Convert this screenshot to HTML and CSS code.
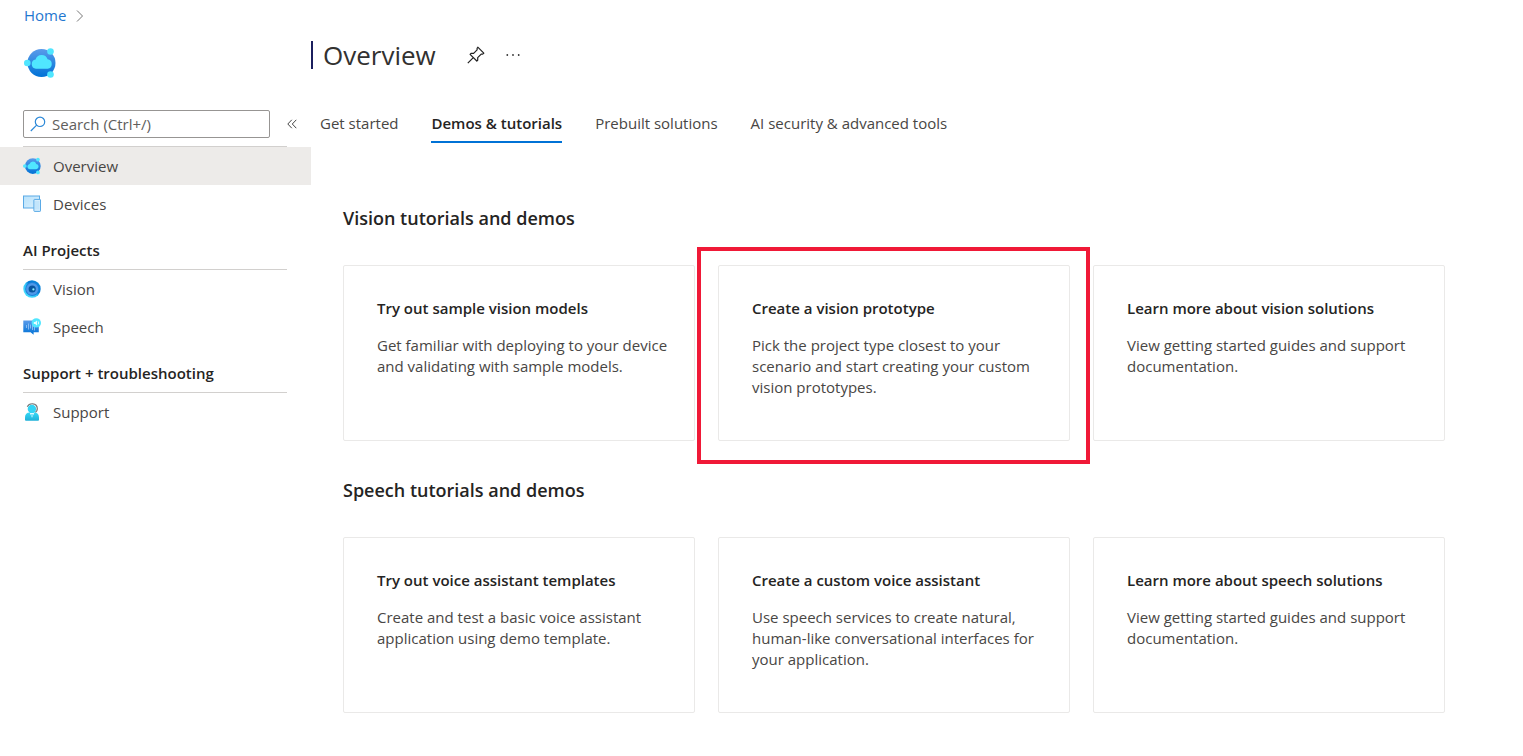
FILE: index.html
```html
<!DOCTYPE html>
<html lang="en">
<head>
<meta charset="utf-8">
<title>Overview</title>
<meta name="viewport" content="width=device-width, initial-scale=1">
<link rel="stylesheet" href="styles.css">
</head>
<body>
<svg width="0" height="0" class="defs" aria-hidden="true">
  <defs>
    <linearGradient id="blue" x1="0" y1="0" x2="0" y2="1"><stop offset="0" stop-color="#5a9bea"/><stop offset="1" stop-color="#0072d6"/></linearGradient>
    <linearGradient id="screen" x1="0" y1="0" x2="1" y2="1"><stop offset="0" stop-color="#b9e2fb"/><stop offset="1" stop-color="#d9f0fe"/></linearGradient>
    <linearGradient id="person" x1="0" y1="0" x2="0" y2="1"><stop offset="0" stop-color="#35d9f7"/><stop offset="1" stop-color="#1fb0d8"/></linearGradient>
    <linearGradient id="ring" x1="0" y1="1" x2="1" y2="0"><stop offset="0" stop-color="#50e6ff"/><stop offset=".45" stop-color="#32c4f7"/><stop offset=".6" stop-color="#0078d4"/><stop offset="1" stop-color="#1490df"/></linearGradient>
    <symbol id="percept" viewBox="0 0 32 32">
      <circle cx="17.500" cy="16" r="14" fill="url(#blue)"/>
      <circle cx="26.500" cy="4.500" r="3.300" fill="#50e6ff"/>
      <circle cx="26.500" cy="27.500" r="3.300" fill="#50e6ff"/>
      <circle cx="3.300" cy="16" r="3.300" fill="#50e6ff"/>
      <path d="M12 21.800a4.700 4.700 0 0 1-.4-9.300 6.300 6.300 0 0 1 12-.2 4.800 4.800 0 0 1 .1 9.500z" fill="#50e6ff"/>
    </symbol>
  </defs>
</svg>
<nav class="breadcrumb" aria-label="Breadcrumb">
  <a href="#">Home</a>
  <svg width="8" height="12" viewBox="0 0 8 12" fill="none" stroke="#777"><path d="M1 .5 6.500 6 1 11.500"/></svg>
</nav>
<div class="blade">
  <aside class="sidebar">
    <svg class="logo" width="32" height="32"><use href="#percept"/></svg>
    <div class="search-row">
      <label class="search">
        <svg width="16" height="16" viewBox="0 0 16 16" fill="none" stroke="#2b88d8" stroke-width="1.200"><circle cx="10" cy="5.800" r="4.700"/><path d="M6.600 9.200.8 15"/></svg>
        <input type="search" placeholder="Search (Ctrl+/)" aria-label="Search">
      </label>
      <button class="collapse" type="button" aria-label="Collapse menu">
        <svg width="10" height="10" viewBox="0 0 10 10" fill="none" stroke="#444"><path d="M4.800.8.800 5l4 4.200M9.300.8l-4 4.200 4 4.200"/></svg>
      </button>
    </div>
    <nav class="menu">
      <hr>
      <a class="item selected" href="#"><svg width="18" height="18"><use href="#percept"/></svg>Overview</a>
      <a class="item" href="#"><svg width="18" height="18" viewBox="0 0 18 18"><rect x=".5" y="1" width="16" height="12" fill="url(#screen)" stroke="#5aaae6"/><rect x="10.900" y="4.400" width="6.600" height="12" rx=".6" fill="#d5edfd" stroke="#5aaae6"/><path d="M12 6h4.400v8.500H12z" fill="#c3e5fb"/></svg>Devices</a>
      <h2>AI Projects</h2>
      <hr>
      <a class="item" href="#"><svg width="18" height="18" viewBox="0 0 18 18"><circle cx="9" cy="9" r="8.700" fill="url(#ring)"/><circle cx="9.200" cy="9" r="7" fill="#1b80dc"/><circle cx="9.200" cy="9" r="6" fill="#4f98e8"/><circle cx="9.200" cy="9" r="3.600" fill="#08559f"/><circle cx="10.400" cy="9.400" r="1.100" fill="#8ff0ff"/></svg>Vision</a>
      <a class="item" href="#"><svg width="18" height="18" viewBox="0 0 18 18"><path d="M.3 2.500h15.500v11.800h-5.200v2.500L7.600 14.300H.3z" fill="url(#blue)"/><path d="M3.500 7v3M5.500 5.500v6M7.500 6.500v4M9.500 5v7M11.500 8.500v4" stroke="#9cc8f6" stroke-width=".8"/><circle cx="13.300" cy="4.900" r="4.700" fill="#50e6ff"/><path d="M10.800 3.900h1.300L14 2.500v4.900l-1.900-1.400h-1.300z" fill="#e6fcff"/><path d="M15.100 3.400q1 1.500 0 3" stroke="#e6fcff" fill="none"/></svg>Speech</a>
      <h2>Support + troubleshooting</h2>
      <hr>
      <a class="item" href="#"><svg width="18" height="18" viewBox="0 0 18 18"><path d="M4.300 3.800C6-.2 14-.8 14.300 5.500c0 2.200-.7 3.200-2.300 3.700" fill="none" stroke="#777" stroke-width="1.200"/><path d="M2 17v-2.700c0-3.300 2-4.800 4.500-4.800h5c2.500 0 4.500 1.500 4.500 4.800V17q0 .7-1 .7H3q-1 0-1-.7z" fill="url(#person)"/><circle cx="8.900" cy="6" r="4.200" fill="#32d4f5"/><path d="m6.800 10.100 2.200 4.600 2.200-4.600z" fill="#eafaff"/><path d="m9 10.800.8 1-.8 3-.8-3z" fill="#32d4f5"/></svg>Support</a>
    </nav>
  </aside>
  <main class="content">
    <header class="title-bar">
      <h1>Overview</h1>
      <button type="button" aria-label="Pin">
        <svg width="18" height="18" viewBox="0 0 18 18" fill="none" stroke="#222" stroke-width="1.200" stroke-linejoin="round"><path d="M10.800 1.200 16.800 7.200 15.700 8.100H14.200L10.700 11.600V14.200L9.800 15 3.100 8.300 4 7.400H6.600L10.100 3.900V2.300zM6.300 11.600.8 17.200"/></svg>
      </button>
      <button type="button" aria-label="More">
        <svg width="14" height="4" viewBox="0 0 14 4" fill="#333"><circle cx="1.300" cy="2" r=".9"/><circle cx="7" cy="2" r=".9"/><circle cx="12.700" cy="2" r=".9"/></svg>
      </button>
    </header>
    <nav class="tabs" aria-label="Sections">
      <a href="#">Get started</a>
      <a class="active" href="#" aria-current="page">Demos &amp; tutorials</a>
      <a href="#">Prebuilt solutions</a>
      <a href="#">AI security &amp; advanced tools</a>
    </nav>
    <section class="group">
      <h2>Vision tutorials and demos</h2>
      <div class="cards">
        <article class="card"><h3>Try out sample vision models</h3><p>Get familiar with deploying to your device and validating with sample models.</p></article>
        <article class="card highlighted"><h3>Create a vision prototype</h3><p>Pick the project type closest to your scenario and start creating your custom vision prototypes.</p></article>
        <article class="card"><h3>Learn more about vision solutions</h3><p>View getting started guides and support documentation.</p></article>
      </div>
    </section>
    <section class="group">
      <h2>Speech tutorials and demos</h2>
      <div class="cards">
        <article class="card"><h3>Try out voice assistant templates</h3><p>Create and test a basic voice assistant application using demo template.</p></article>
        <article class="card"><h3>Create a custom voice assistant</h3><p>Use speech services to create natural, human-like conversational interfaces for your application.</p></article>
        <article class="card"><h3>Learn more about speech solutions</h3><p>View getting started guides and support documentation.</p></article>
      </div>
    </section>
  </main>
</div>
</body>
</html>
```
FILE: styles.css
```css
* {
  box-sizing: border-box;
}

body {
  margin: 0;
  background: #fff;
  color: #484644;
  font-family: "Open Sans", "Noto Sans", sans-serif;
  font-size: 15px;
  line-height: 21px;
}

h1, h2, h3, p {
  margin: 0;
}

h2, h3 {
  color: #252423;
  font-weight: 600;
}

a {
  color: inherit;
  text-decoration: none;
}

button {
  display: flex;
  align-items: center;
  padding: 0;
  border: 0;
  background: none;
}

svg {
  flex: none;
}

.defs {
  position: absolute;
}

.breadcrumb {
  display: flex;
  align-items: center;
  gap: 10px;
  height: 31px;
  padding-left: 24px;
}

.breadcrumb a {
  color: #1f77d0;
}

.blade {
  display: flex;
  align-items: flex-start;
}

.sidebar {
  flex: none;
  width: 311px;
}

.logo {
  display: block;
  margin: 16px 0 31px 24px;
}

.search-row {
  display: flex;
  align-items: center;
  gap: 17px;
  margin: 0 0 8px 23px;
}

.search {
  display: flex;
  align-items: center;
  gap: 6px;
  width: 247px;
  height: 28px;
  padding: 0 6px;
  border: 1px solid #979593;
  border-radius: 2px;
}

.search input {
  flex: 1;
  min-width: 0;
  padding: 0;
  border: 0;
  outline: 0;
  background: none;
  color: inherit;
  font: inherit;
}

.search input::placeholder {
  color: #605e5c;
  opacity: 1;
}

.menu hr {
  height: 1px;
  margin: 0 24px 0 23px;
  border: 0;
  background: #d2d0ce;
}

.menu h2 {
  padding: 17px 0 8px 23px;
  font-size: 15px;
}

.item {
  display: flex;
  align-items: center;
  gap: 12px;
  height: 38px;
  padding-left: 23px;
}

.selected {
  background: #edebe9;
}

.content {
  flex: 1;
  min-width: 0;
}

.title-bar {
  display: flex;
  align-items: center;
  height: 48px;
}

.title-bar h1 {
  margin-right: 31px;
  padding-left: 10px;
  border-left: 2px solid #1b1f5e;
  color: #323130;
  font-size: 26px;
  font-weight: 400;
  line-height: 28px;
}

.title-bar button + button {
  margin-left: 21px;
}

.tabs {
  display: flex;
  gap: 33px;
  margin: 28px 0 63px 9px;
}

.tabs a {
  padding: 6px 0 7px;
  border-bottom: 2px solid transparent;
}

.tabs .active {
  border-color: #0072d6;
  color: #252423;
  font-weight: 600;
}

.group {
  margin: 0 78px 37px 32px;
}

.group h2 {
  margin-bottom: 35px;
  font-size: 18px;
  line-height: 24px;
}

.cards {
  display: grid;
  grid-template-columns: repeat(3, 1fr);
  gap: 23px;
}

.card {
  position: relative;
  min-height: 176px;
  padding: 32px 24px 32px 33px;
  border: 1px solid #eae9e8;
  border-radius: 2px;
}

.card h3 {
  margin-bottom: 16px;
  font-size: 15px;
}

.highlighted::after {
  content: "";
  position: absolute;
  inset: -19px -21px -24px -22px;
  border: 4px solid #f01937;
}
```
